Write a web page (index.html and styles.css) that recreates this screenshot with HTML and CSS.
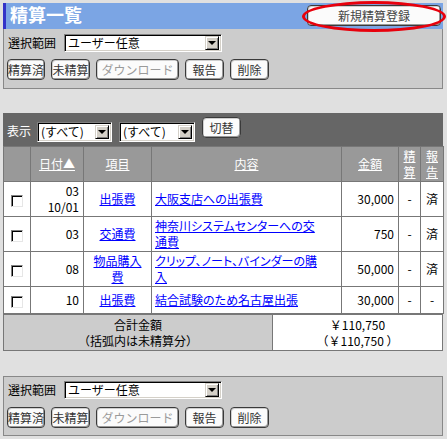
FILE: index.html
```html
<!DOCTYPE html>
<html lang="ja">
<head>
<meta charset="utf-8">
<title>精算一覧</title>
<link rel="stylesheet" href="styles.css">
</head>
<body>
<div class="page">
  <div class="head">
    <h1 class="title">精算一覧</h1>
    <div class="new-wrap">
      <button class="btn new">新規精算登録</button>
      <span class="mark"></span>
    </div>
  </div>

  <div class="panel top">
    <div class="row">
      <span class="lbl">選択範囲</span>
      <div class="sel wide"><span class="val">ユーザー任意</span><span class="arr"></span></div>
    </div>
    <div class="btns">
      <button class="btn w38">精算済</button>
      <button class="btn w39">未精算</button>
      <button class="btn w83 off">ダウンロード</button>
      <button class="btn w39">報告</button>
      <button class="btn w39">削除</button>
    </div>
  </div>

  <div class="list">
    <div class="bar">
      <span class="bar-lbl">表示</span>
      <div class="sel s1"><span class="val">(すべて)</span><span class="arr"></span></div>
      <div class="sel s2"><span class="val">(すべて)</span><span class="arr"></span></div>
      <button class="btn sw">切替</button>
    </div>
    <table class="grid">
      <colgroup>
        <col class="c-cb"><col class="c-date"><col class="c-item"><col class="c-desc"><col class="c-amt"><col class="c-st"><col class="c-rp">
      </colgroup>
      <thead>
        <tr>
          <th></th>
          <th><a href="#">日付▲</a></th>
          <th><a href="#">項目</a></th>
          <th><a href="#">内容</a></th>
          <th><a href="#">金額</a></th>
          <th><a href="#">精<br>算</a></th>
          <th><a href="#">報<br>告</a></th>
        </tr>
      </thead>
      <tbody>
        <tr>
          <td class="cb"><span class="box"></span></td>
          <td class="num">03<br>10/01</td>
          <td class="mid"><a href="#">出張費</a></td>
          <td class="desc"><a href="#">大阪支店への出張費</a></td>
          <td class="num">30,000</td>
          <td class="mid">-</td>
          <td class="mid">済</td>
        </tr>
        <tr>
          <td class="cb"><span class="box"></span></td>
          <td class="num">03</td>
          <td class="mid"><a href="#">交通費</a></td>
          <td class="desc"><a href="#">神奈川システムセンターへの交<br>通費</a></td>
          <td class="num">750</td>
          <td class="mid">-</td>
          <td class="mid">済</td>
        </tr>
        <tr>
          <td class="cb"><span class="box"></span></td>
          <td class="num">08</td>
          <td class="mid"><a href="#">物品購入<br>費</a></td>
          <td class="desc"><a href="#">クリップ、ノート、バインダーの購<br>入</a></td>
          <td class="num">50,000</td>
          <td class="mid">-</td>
          <td class="mid">済</td>
        </tr>
        <tr class="one">
          <td class="cb"><span class="box"></span></td>
          <td class="num">10</td>
          <td class="mid"><a href="#">出張費</a></td>
          <td class="desc"><a href="#">結合試験のため名古屋出張</a></td>
          <td class="num">30,000</td>
          <td class="mid">-</td>
          <td class="mid">-</td>
        </tr>
      </tbody>
    </table>
    <div class="total">
      <div class="t-lbl">合計金額<br>（括弧内は未精算分）</div>
      <div class="t-val">￥110,750<br>（￥110,750 ）</div>
    </div>
  </div>

  <div class="panel bottom">
    <div class="row">
      <span class="lbl">選択範囲</span>
      <div class="sel wide"><span class="val">ユーザー任意</span><span class="arr"></span></div>
    </div>
    <div class="btns">
      <button class="btn w38">精算済</button>
      <button class="btn w39">未精算</button>
      <button class="btn w83 off">ダウンロード</button>
      <button class="btn w39">報告</button>
      <button class="btn w39">削除</button>
    </div>
  </div>
</div>
</body>
</html>
```

FILE: styles.css
```css
* { box-sizing: border-box; }
html, body { margin: 0; padding: 0; }
body {
  background: #e0e0e0;
  font-family: "Noto Sans CJK JP", "Noto Sans", sans-serif;
  font-size: 12px;
  line-height: 16px;
  color: #000;
}
.page { width: 440px; margin: 3px 0 0 3px; }

/* header */
.head {
  height: 26px;
  background: #7ba5e4;
  border-left: 3px solid #3333c8;
  display: flex;
  justify-content: space-between;
  align-items: flex-start;
}
.title {
  margin: 0;
  padding: 0 0 0 4px;
  font-size: 18px;
  line-height: 22px;
  font-weight: bold;
  color: #fff;
}
.new-wrap { position: relative; margin: 2px 2px 0 0; }
.mark {
  position: absolute;
  left: -5px;
  top: -4px;
  width: 144px;
  height: 31px;
  border: 3px solid #e8000c;
  border-radius: 50%;
  pointer-events: none;
}

/* buttons */
.btn {
  height: 21px;
  padding: 0;
  font-family: "Noto Sans CJK JP", sans-serif;
  font-size: 12px;
  line-height: 15px;
  color: #333;
  background: #fbfbfb;
  border: 1px solid #3a3a3a;
  border-radius: 4px;
  box-shadow: inset 1px 1px 0 #cfcfcf, inset -1px -1px 0 #9a9a9a;
}
.btn.new { width: 134px; color: #444; }
.btn.off { color: #9a9a9a; }
.w38 { width: 38px; }
.w39 { width: 39px; }
.w83 { width: 83px; }

/* panels */
.panel {
  background: #cccccc;
  border: 1px solid #888;
  padding: 5px 0 8px 4px;
}
.panel.top { border-top: none; }
.panel.bottom { margin-top: 25px; padding-top: 4px; padding-bottom: 7px; }
.row { display: flex; align-items: center; gap: 8px; }
.btns { display: flex; gap: 6px; margin-top: 7px; margin-left: -1px; }
.bottom .btns { margin-top: 8px; }

/* select look-alike */
.sel {
  display: flex;
  align-items: stretch;
  justify-content: space-between;
  background: #fff;
  border: 1px solid;
  border-color: #808080 #fff #fff #808080;
  box-shadow: inset 1px 1px 0 #000, inset -1px -1px 0 #d4d0c8;
  padding: 2px 2px 2px 3px;
}
.sel .val { line-height: 14px; white-space: nowrap; }
.sel.wide { width: 158px; height: 18px; padding-top: 1px; padding-bottom: 1px; }
.arr {
  position: relative;
  width: 14px;
  flex: none;
  background: #d4d0c8;
  border: 1px solid;
  border-color: #d4d0c8 #000 #000 #d4d0c8;
  box-shadow: inset 1px 1px 0 #fff, inset -1px -1px 0 #808080;
}
.arr::after {
  content: "";
  position: absolute;
  left: 50%;
  top: 50%;
  margin: -2px 0 0 -4px;
  width: 0;
  height: 0;
  border-left: 4px solid transparent;
  border-right: 4px solid transparent;
  border-top: 4px solid #000;
}

/* list */
.list { margin-top: 24px; }
.bar {
  height: 33px;
  background: #666;
  display: flex;
  align-items: flex-start;
  padding-left: 4px;
}
.bar-lbl { color: #fff; margin-top: 10px; margin-right: 6px; }
.sel.s1 { width: 75px; height: 20px; margin-top: 9px; }
.sel.s2 { width: 76px; height: 20px; margin-top: 9px; margin-left: 7px; }
.btn.sw { width: 39px; margin-left: 7px; margin-top: 4px; }

.grid {
  width: 440px;
  table-layout: fixed;
  border-collapse: collapse;
  background: #fff;
}
.c-cb { width: 27px; }
.c-date { width: 53px; }
.c-item { width: 68px; }
.c-desc { width: 190px; }
.c-amt { width: 57px; }
.c-st { width: 22px; }
.c-rp { width: 23px; }

.grid th {
  background: #999;
  color: #fff;
  font-weight: normal;
  border: 1px solid #777;
  padding: 1px 2px;
  text-align: center;
  vertical-align: middle;
}
.grid th a { color: #fff; }
.grid td {
  border: 1px solid #777;
  padding: 1px 4px;
  vertical-align: middle;
  white-space: nowrap;
}
.grid tr.one td { height: 27px; }
.grid a { color: #0000ff; text-decoration: underline; }
.grid .num { text-align: right; }
.grid .mid { text-align: center; }
.grid td.desc { padding-left: 3px; font-feature-settings: "palt"; }
.grid td.cb { text-align: center; padding: 0; }
.box {
  display: inline-block;
  width: 12px;
  height: 12px;
  vertical-align: middle;
  background: #fff;
  border: 1px solid;
  border-color: #808080 #e6e6e6 #e6e6e6 #808080;
  box-shadow: inset 1px 1px 0 #000;
}

.total {
  display: grid;
  grid-template-columns: 269px 1fr;
  border: 1px solid #777;
  text-align: center;
}
.t-lbl { background: #ccc; border-right: 1px solid #777; padding: 2px 0 1px; }
.t-val { background: #fff; padding: 2px 0 1px; }
```
